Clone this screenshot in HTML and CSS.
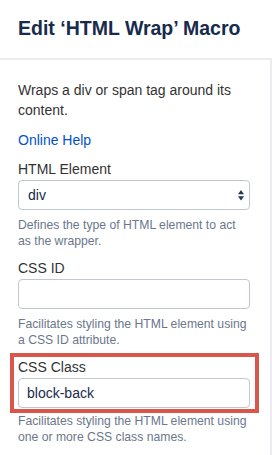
FILE: index.html
```html
<!DOCTYPE html>
<html lang="en">
<head>
  <meta charset="UTF-8" />
  <title>Edit HTML Wrap Macro</title>
  <link rel="stylesheet" href="styles.css">
</head>
<body>

  <div class="header">
    <h1>Edit ‘HTML Wrap’ Macro</h1>
  </div>

  <div class="panel">
    <p class="desc">Wraps a div or span tag around its content.</p>
    <a class="help-link" href="#">Online Help</a>

    <div class="field">
      <label>HTML Element</label>
      <div class="select">
        <span>div</span>
        <svg class="arrows" width="6" height="11" viewBox="0 0 6 11">
          <polygon points="3,0 6,4.2 0,4.2" />
          <polygon points="0,6.3 6,6.3 3,10.5" />
        </svg>
      </div>
      <p class="hint">Defines the type of HTML element to act as the wrapper.</p>
    </div>

    <div class="field">
      <label>CSS ID</label>
      <div class="input"></div>
      <p class="hint">Facilitates styling the HTML element using a CSS ID attribute.</p>
    </div>

    <!-- highlighted field -->
    <div class="marked">
      <label>CSS Class</label>
      <div class="input">block-back</div>
    </div>
    <p class="hint after-mark">Facilitates styling the HTML element using one or more CSS class names.</p>
  </div>

</body>
</html>
```

FILE: styles.css
```css
body {
  margin: 0;
  font-family: 'Liberation Sans', Arial, sans-serif;
  background-color: #fff;
  color: #333;
}

.header {
  height: 58px;
  padding: 16px 0 0 18px;
  box-sizing: border-box;
}

.header h1 {
  margin: 0;
  font-size: 19.5px;
  line-height: 24px;
  font-weight: bold;
  color: #172b4d;
}

.panel {
  border-top: 2px solid #ebecf0;
  border-right: 2px solid #ebecf0;
  padding: 20px 20px 0 18px;
  height: 397px;
  box-sizing: border-box;
}

.desc {
  margin: 0;
  font-size: 14px;
  line-height: 20px;
}

.help-link {
  display: block;
  margin-top: 10px;
  font-size: 14px;
  line-height: 20px;
  color: #0052cc;
  text-decoration: none;
}

.field {
  margin-top: 9px;
}

label {
  display: block;
  margin-bottom: 1px;
  font-size: 14px;
  line-height: 20px;
  color: #333;
}

.select,
.input {
  height: 30px;
  box-sizing: border-box;
  border: 1px solid #c1c7d0;
  border-radius: 4px;
  background: #fff;
  font-size: 14px;
  line-height: 28px;
  color: #172b4d;
}

.select {
  display: flex;
  align-items: center;
  justify-content: space-between;
  padding: 0 5px 0 9px;
}

.arrows {
  fill: #253858;
}

.input {
  padding-left: 8px;
}

.hint {
  margin: 7px 0 0;
  font-size: 12.2px;
  line-height: 16px;
  color: #6b778c;
}

.marked {
  margin: 5px -9px 0 -8px;
  border: 4px solid #d9574a;
  padding: 0 5px 1px 4px;
}

.hint.after-mark {
  margin-top: 0;
}
```
